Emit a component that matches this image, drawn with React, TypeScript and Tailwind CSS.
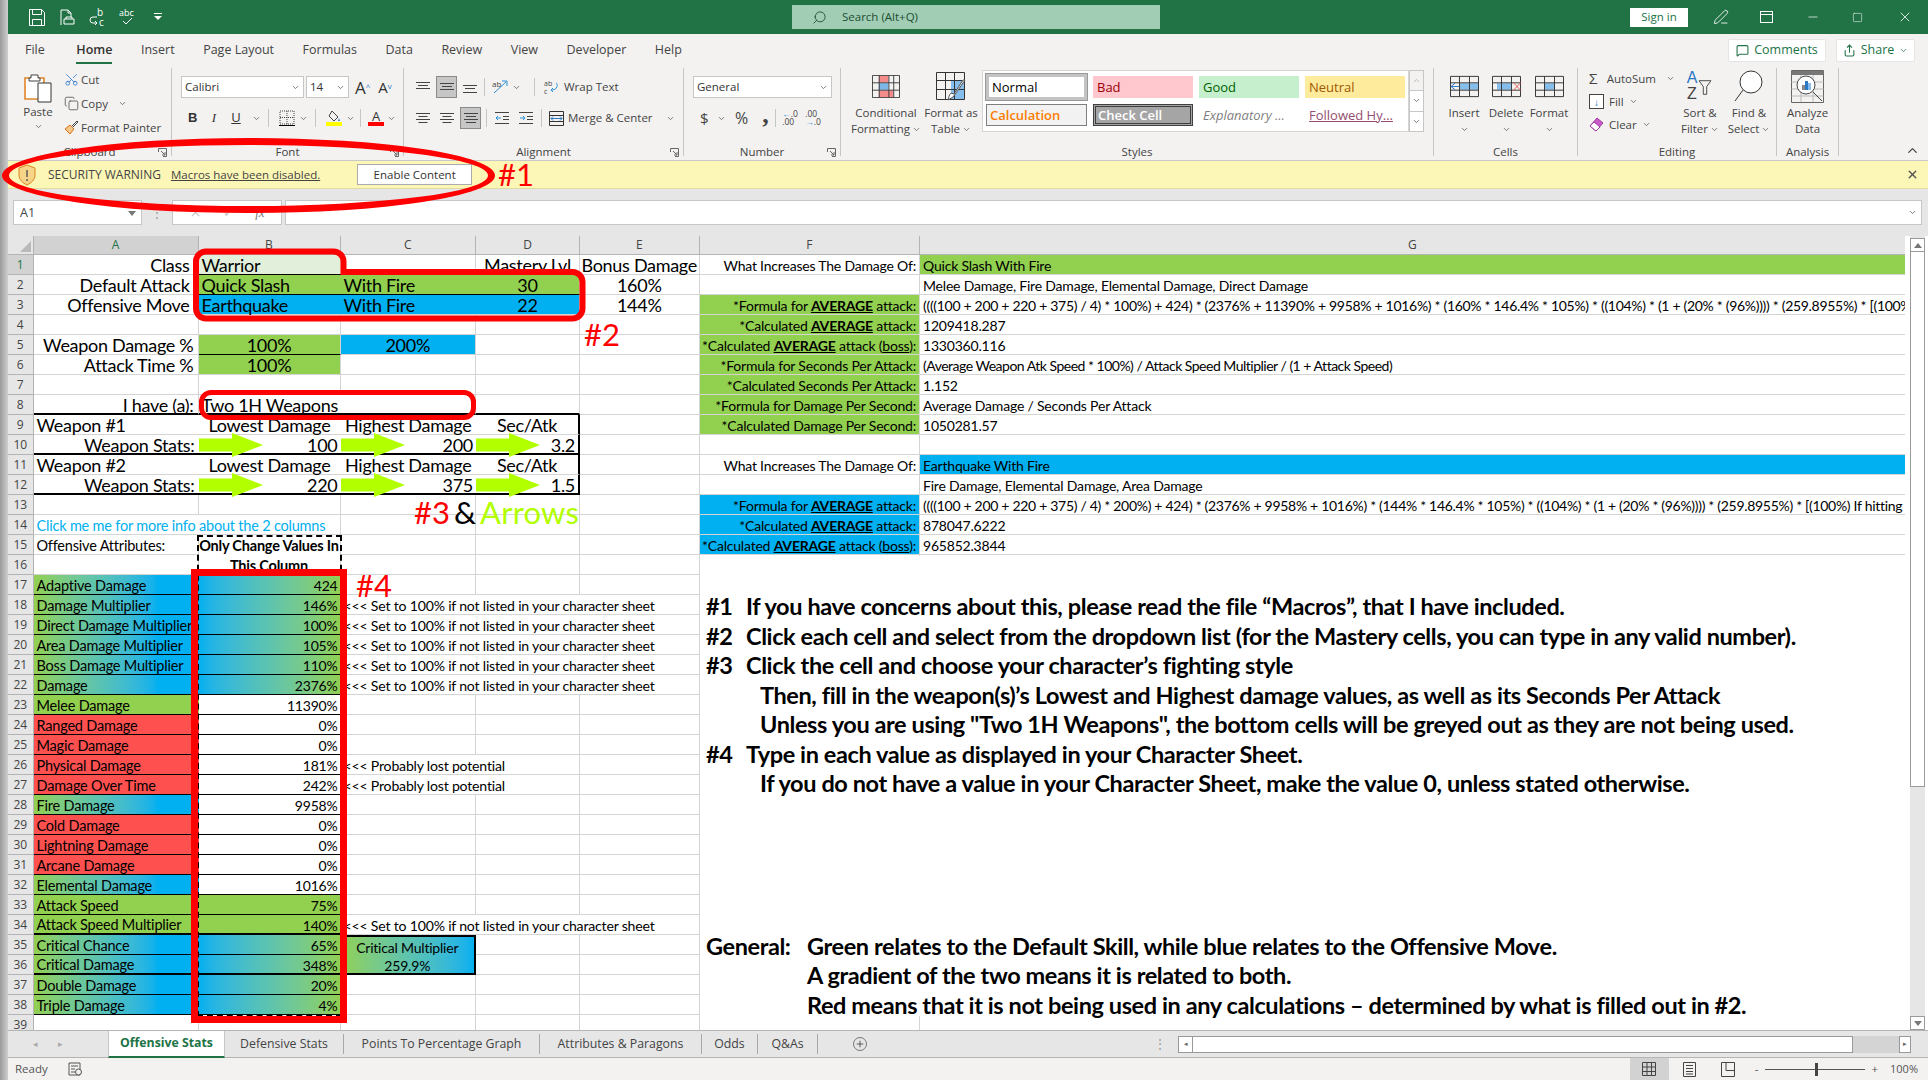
import React from 'react';
import { twMerge } from 'tailwind-merge';
import { Scissors, ChevronDown, ChevronUp, X, Search, Minus, Square, PenLine, MessageSquare, Share, Plus, Copy } from 'lucide-react';

type Def = { t?: React.ReactNode; c?: string };
const d = (t?: React.ReactNode, c = ''): Def => ({ t, c });

const GREEN = 'bg-[#92d050]';
const BLUE = 'bg-[#00b0f0]';
const RIGHT = 'justify-end';
const RIGHT8 = 'justify-end pr-[8px]';
const RIGHT4 = 'justify-end pr-[4px]';
const CENTER = 'justify-center';
const NOR = 'border-r-0';
const SM = 'text-[14.5px] tracking-[-0.2px]';

function Avg() {
  return <b className="underline">AVERAGE</b>;
}

function Arrow() {
  return (
    <svg className="absolute left-0 top-[-2px] z-10" width="64" height="24" viewBox="0 0 64 24">
      <path d="M0 5.5h33V0l31 12-31 12v-5.5H0z" fill="#b2ff00" />
    </svg>
  );
}

function Cell({ def, small }: { def?: Def; small?: boolean }) {
  return (
    <div
      className={twMerge(
        "relative flex items-center whitespace-nowrap border-r border-b border-[#d4d4d4] px-[3px] pt-[2px] leading-none font-['Lato',sans-serif] text-black min-w-0",
        small ? 'text-[14px] tracking-[-0.2px]' : 'text-[18px] tracking-[-0.3px]',
        def?.c
      )}
    >
      {def?.t}
    </div>
  );
}

const rowsTop: Record<number, { big: Def[]; f?: Def; g?: Def }> = {
  1: { big: [d('Class', RIGHT8), d('Warrior', 'bg-[#e2efda] border-b-black ' + NOR), d('', 'border-b-0'), d('Mastery Lvl', CENTER), d('Bonus Damage', CENTER)], f: d('What Increases The Damage Of:', RIGHT), g: d('Quick Slash With Fire', GREEN) },
  2: { big: [d('Default Attack', RIGHT8), d('Quick Slash', GREEN + ' border-b-black ' + NOR), d('With Fire', GREEN + ' border-b-black ' + NOR), d('30', GREEN + ' border-b-black ' + CENTER), d('160%', CENTER)], g: d('Melee Damage, Fire Damage, Elemental Damage, Direct Damage') },
  3: { big: [d('Offensive  Move', RIGHT8), d('Earthquake', BLUE + ' ' + NOR), d('With Fire', BLUE + ' ' + NOR), d('22', BLUE + ' ' + CENTER), d('144%', CENTER)], f: d(<span>*Formula for <Avg /> attack:</span>, GREEN + ' ' + RIGHT), g: d('((((100 + 200 + 220 + 375) / 4) * 100%) + 424) * (2376% + 11390% + 9958% + 1016%) * (160% * 146.4% * 105%) * ((104%) * (1 + (20% * (96%)))) * (259.8955%) * [(100%) If hitting a boss]', 'overflow-hidden tracking-[-0.3px]') },
  4: { big: [d(), d(), d(), d(), d()], f: d(<span>*Calculated <Avg /> attack:</span>, GREEN + ' ' + RIGHT), g: d('1209418.287') },
  5: { big: [d('Weapon Damage %', RIGHT4), d('100%', GREEN + ' border-b-black ' + CENTER), d('200%', BLUE + ' ' + CENTER), d(), d()], f: d(<span>*Calculated <Avg /> attack (<u>boss</u>):</span>, GREEN + ' ' + RIGHT), g: d('1330360.116') },
  6: { big: [d('Attack Time %', RIGHT4), d('100%', GREEN + ' ' + CENTER), d(), d(), d()], f: d('*Formula for Seconds Per Attack:', GREEN + ' ' + RIGHT), g: d('(Average Weapon Atk Speed * 100%) / Attack Speed Multiplier / (1 + Attack Speed)', 'tracking-[-0.5px]') },
  7: { big: [d(), d(), d(), d(), d()], f: d('*Calculated Seconds Per Attack:', GREEN + ' ' + RIGHT), g: d('1.152') },
  8: { big: [d('I have (a):', RIGHT4 + ' border-b-black border-b-2'), d('Two 1H Weapons', NOR + ' border-b-black border-b-2'), d('', 'border-b-black border-b-2'), d('', 'border-b-black border-b-2'), d()], f: d('*Formula for Damage Per Second:', GREEN + ' ' + RIGHT), g: d('Average Damage / Seconds Per Attack') },
  9: { big: [d('Weapon #1', NOR), d('Lowest Damage', CENTER + ' ' + NOR), d('Highest Damage', CENTER + ' ' + NOR), d('Sec/Atk', CENTER + ' border-r-black border-r-2'), d()], f: d('*Calculated Damage Per Second:', GREEN + ' ' + RIGHT), g: d('1050281.57') },
  10: { big: [d('Weapon Stats:', RIGHT4 + ' border-b-black border-b-2 ' + NOR), d(<><Arrow />100</>, RIGHT + ' border-b-black border-b-2 ' + NOR), d(<><Arrow />200</>, RIGHT + ' border-b-black border-b-2 ' + NOR), d(<><Arrow />3.2</>, RIGHT + ' border-b-black border-b-2 border-r-black border-r-2'), d()] },
  11: { big: [d('Weapon #2', NOR), d('Lowest Damage', CENTER + ' ' + NOR), d('Highest Damage', CENTER + ' ' + NOR), d('Sec/Atk', CENTER + ' border-r-black border-r-2'), d()], f: d('What Increases The Damage Of:', RIGHT), g: d('Earthquake With Fire', BLUE) },
  12: { big: [d('Weapon Stats:', RIGHT4 + ' border-b-black border-b-2 ' + NOR), d(<><Arrow />220</>, RIGHT + ' border-b-black border-b-2 ' + NOR), d(<><Arrow />375</>, RIGHT + ' border-b-black border-b-2 ' + NOR), d(<><Arrow />1.5</>, RIGHT + ' border-b-black border-b-2 border-r-black border-r-2'), d()], g: d('Fire Damage, Elemental Damage, Area Damage') },
  13: { big: [d(), d(), d(), d(), d()], f: d(<span>*Formula for <Avg /> attack:</span>, BLUE + ' ' + RIGHT), g: d('((((100 + 200 + 220 + 375) / 4) * 200%) + 424) * (2376% + 9958% + 1016%) * (144% * 146.4% * 105%) * ((104%) * (1 + (20% * (96%)))) * (259.8955%) * [(100%) If hitting a boss]', 'overflow-hidden tracking-[-0.3px]') },
  14: { big: [d('Click me me for more info about the 2 columns', 'text-[#00b0f0] ' + SM + ' ' + NOR), d(), d(), d(), d()], f: d(<span>*Calculated <Avg /> attack:</span>, BLUE + ' ' + RIGHT), g: d('878047.6222') },
  15: { big: [d('Offensive Attributes:', SM), d(<b>Only Change Values In</b>, SM + ' border-b-0 ' + CENTER), d(), d(), d()], f: d(<span>*Calculated <Avg /> attack (<u>boss</u>):</span>, BLUE + ' ' + RIGHT), g: d('965852.3844') },
  16: { big: [d(), d(<b>This Column</b>, SM + ' ' + CENTER), d(), d(), d()] },
};

type Kind = 'grad' | 'green' | 'red';
const NOTE = '<<< Set to 100% if not listed in your character sheet';
const LOST = '<<< Probably lost potential';
const attrs: [string, string, Kind, Kind | 'white', string?][] = [
  ['Adaptive Damage', '424', 'grad', 'grad'],
  ['Damage Multiplier', '146%', 'grad', 'grad', NOTE],
  ['Direct Damage Multiplier', '100%', 'grad', 'grad', NOTE],
  ['Area Damage Multiplier', '105%', 'grad', 'grad', NOTE],
  ['Boss Damage Multiplier', '110%', 'grad', 'grad', NOTE],
  ['Damage', '2376%', 'grad', 'grad', NOTE],
  ['Melee Damage', '11390%', 'green', 'white'],
  ['Ranged Damage', '0%', 'red', 'white'],
  ['Magic Damage', '0%', 'red', 'white'],
  ['Physical Damage', '181%', 'red', 'white', LOST],
  ['Damage Over Time', '242%', 'red', 'white', LOST],
  ['Fire Damage', '9958%', 'grad', 'white'],
  ['Cold Damage', '0%', 'red', 'white'],
  ['Lightning Damage', '0%', 'red', 'white'],
  ['Arcane Damage', '0%', 'red', 'white'],
  ['Elemental Damage', '1016%', 'grad', 'white'],
  ['Attack Speed', '75%', 'green', 'green'],
  ['Attack Speed Multiplier', '140%', 'green', 'green', NOTE],
  ['Critical Chance', '65%', 'grad', 'grad'],
  ['Critical Damage', '348%', 'grad', 'grad'],
  ['Double Damage', '20%', 'grad', 'grad'],
  ['Triple Damage', '4%', 'grad', 'grad'],
];

const aCls: Record<Kind, string> = {
  grad: 'bg-linear-to-r from-[#92d050] to-[#00b0f0] to-75% border-b-black border-r-0',
  green: 'bg-[#92d050] border-b-black border-r-0',
  red: 'bg-[#ff5050] border-b-black border-r-0',
};
const bCls: Record<string, string> = {
  grad: 'bg-linear-to-r from-[#00b0f0] to-[#92d050] border-b-black justify-end border-r-0',
  green: 'bg-[#92d050] border-b-black justify-end border-r-0',
  white: 'bg-white border-b-black justify-end border-r-0',
  red: '',
};

function RowHead({ n }: { n: number }) {
  return (
    <div
      className={twMerge(
        'flex items-center justify-center border-b border-r border-[#b4b4b4] bg-[#e6e6e6] text-[12px] text-[#444]',
        n === 1 && 'bg-[#d2d2d2] text-[#217346]'
      )}
    >
      {n}
    </div>
  );
}

function Sheet() {
  const rows: React.ReactNode[] = [];
  for (let n = 1; n <= 16; n++) {
    const r = rowsTop[n];
    rows.push(<RowHead key={`h${n}`} n={n} />);
    r.big.forEach((def, i) => rows.push(<Cell key={`${n}-${i}`} def={def} />));
    rows.push(<Cell key={`${n}-f`} def={r.f} small />);
    rows.push(<Cell key={`${n}-g`} def={r.g} small />);
  }
  attrs.forEach(([name, val, a, b, note], i) => {
    const n = 17 + i;
    rows.push(<RowHead key={`h${n}`} n={n} />);
    const thick = n === 34 || n === 36 ? ' border-b-2' : '';
    rows.push(<Cell key={`${n}-a`} small def={d(name, SM + ' ' + aCls[a] + thick)} />);
    rows.push(<Cell key={`${n}-b`} small def={d(val, bCls[b] + thick)} />);
    if (n === 35) {
      rows.push(<Cell key={`${n}-c`} small def={d('Critical Multiplier', 'bg-linear-to-r from-[#92d050] to-[#00b0f0] justify-center border-t-2 border-t-black border-b-0 border-r-2 border-r-black')} />);
    } else if (n === 36) {
      rows.push(<Cell key={`${n}-c`} small def={d('259.9%', 'bg-linear-to-r from-[#92d050] to-[#00b0f0] justify-center border-b-2 border-b-black border-r-2 border-r-black')} />);
    } else {
      rows.push(<Cell key={`${n}-c`} small def={d(note, note ? NOR + ' text-[14.1px]' : '')} />);
    }
    rows.push(<Cell key={`${n}-d`} small def={d('', note === NOTE ? NOR : '')} />);
    rows.push(<Cell key={`${n}-e`} small />);
    rows.push(<Cell key={`${n}-f`} small />);
    rows.push(<Cell key={`${n}-g`} small />);
  });
  rows.push(<RowHead key="h39" n={39} />);
  for (let i = 0; i < 7; i++) rows.push(<Cell key={`39-${i}`} small />);

  return (
    <div className="flex-1 min-h-0 overflow-hidden flex">
      <div className="flex flex-col w-[1897px] overflow-hidden">
        <div className="grid grid-cols-[25.5px_165px_142px_135.5px_104px_119.5px_220.5px_985.5px] h-[19px] bg-[#e6e6e6] text-[12px] text-[#444] shrink-0">
          <div className="relative border-r border-b border-[#b4b4b4]">
            <svg className="absolute right-[2px] bottom-[2px]" width="11" height="11" viewBox="0 0 11 11">
              <path d="M11 0v11H0z" fill="#b9b9b9" />
            </svg>
          </div>
          {['A', 'B', 'C', 'D', 'E', 'F', 'G'].map((h, i) => (
            <div
              key={h}
              className={twMerge(
                'flex items-center justify-center border-r border-b border-[#b4b4b4]',
                i === 0 && 'bg-[#d2d2d2] text-[#217346]'
              )}
            >
              {h}
            </div>
          ))}
        </div>
        <div className="grid grid-cols-[25.5px_165px_142px_135.5px_104px_119.5px_220.5px_985.5px] auto-rows-[20px] flex-1 min-h-0 overflow-hidden">
          {rows}
        </div>
      </div>
      <VScroll />
    </div>
  );
}

function VScroll() {
  return (
    <div className="ml-[5px] mr-[3px] w-[15px] flex flex-col bg-[#e6e6e6] pt-[2px] shrink-0">
      <div className="h-[14px] bg-white border border-[#9a9a9a] flex items-center justify-center">
        <svg width="8" height="5"><path d="M4 0l4 5H0z" fill="#777" /></svg>
      </div>
      <div className="h-[535px] bg-white border-x border-b border-[#9a9a9a]" />
      <div className="flex-1" />
      <div className="h-[14px] bg-white border border-[#9a9a9a] flex items-center justify-center">
        <svg width="8" height="5"><path d="M4 5l4-5H0z" fill="#777" /></svg>
      </div>
    </div>
  );
}

function Caret({ className = '' }: { className?: string }) {
  return <ChevronDown size={9} strokeWidth={2} className={twMerge('text-[#555] shrink-0', className)} />;
}

function Group({ label, className, children, expander }: { label: string; className: string; children: React.ReactNode; expander?: boolean }) {
  return (
    <div className={twMerge('relative flex flex-col h-[88px] border-r border-[#c6c6c6] shrink-0', className)}>
      <div className="flex-1 min-h-0 flex">{children}</div>
      <div className="h-[16px] -mb-[4px] text-center text-[11.5px] leading-[16px] text-[#444]">{label}</div>
      {expander && (
        <svg className="absolute right-[4px] bottom-[-1px]" width="9" height="9" viewBox="0 0 9 9" fill="none" stroke="#666">
          <path d="M.5 4V.5H8.5V8.5H5M3 3l4 4M7 4v3H4" />
        </svg>
      )}
    </div>
  );
}

function Big({ icon, l1, l2, caret, className = '' }: { icon: React.ReactNode; l1: string; l2?: string; caret?: boolean; className?: string }) {
  return (
    <div className={twMerge('flex flex-col items-center text-[11.5px] leading-[16px] text-[#444]', className)}>
      <div className="h-[36px] flex items-center justify-center">{icon}</div>
      <div className="mt-[1px]">{l1}</div>
      {l2 ? (
        <div className="flex items-center gap-[2px]">{l2}{caret && <Caret />}</div>
      ) : (
        caret && <div className="h-[16px] flex items-center"><Caret /></div>
      )}
    </div>
  );
}

function Lines({ rows, w = 14 }: { rows: [number, number][]; w?: number }) {
  return (
    <svg width={w} height="14" viewBox={`0 0 ${w} 14`} stroke="#444">
      {rows.map(([y, l], i) => (
        <path key={i} d={`M${(w - l) / 2} ${y + 0.5}h${l}`} />
      ))}
    </svg>
  );
}

function GridIcon({ fills, extra }: { fills: React.ReactNode; extra?: React.ReactNode }) {
  return (
    <svg width="31" height="23" viewBox="0 0 31 25" preserveAspectRatio="none" fill="none">
      {fills}
      <path d="M1.5 1.5h28v22h-28zM1.5 8.5h28M1.5 16.5h28M10.5 1.5v22M20.5 1.5v22" stroke="#333" />
      {extra}
    </svg>
  );
}

function Ribbon() {
  return (
    <div className="flex h-[92px] bg-[#f3f2f1] pb-[4px] shrink-0">
      <Group label="Clipboard" className="w-[164px]" expander>
        <div className="flex flex-col items-center ml-[14px] w-[32px] text-[11.5px] leading-[16px] text-[#444]">
          <svg className="mt-[5px]" width="28" height="30" viewBox="0 0 28 30" fill="none">
            <path d="M1 5h19v21H1z" fill="#fff" stroke="#e0862a" strokeWidth="1.6" />
            <path d="M7 5V2h7v3h2v3H5V5z" fill="#fff" stroke="#444" />
            <path d="M14 10h13v19H14z" fill="#fff" stroke="#333" />
          </svg>
          <div className="mt-[1px]">Paste</div>
          <Caret className="mt-[2px]" />
        </div>
        <div className="ml-[10px] mt-[3px] flex flex-col gap-[7px] text-[11.5px] leading-[17px] text-[#444]">
          <div className="flex items-center gap-[2px]"><Scissors size={15} className="text-[#2b78c5] -rotate-90" strokeWidth={1.3} />Cut</div>
          <div className="flex items-center gap-[2px]"><Copy size={15} strokeWidth={1.2} />Copy<Caret className="ml-[8px]" /></div>
          <div className="flex items-center gap-[2px]">
            <svg width="15" height="15" viewBox="0 0 15 15" fill="none"><path d="M1 9l5-4 4 4-4 5z" fill="#f6c58a" stroke="#d9731f" /><path d="M8 6l5-5 1 1-5 5" stroke="#444" /></svg>
            Format Painter
          </div>
        </div>
      </Group>

      <Group label="Font" className="w-[232px]" expander>
        <div className="flex flex-col pl-[9px] pt-[8px]">
          <div className="flex items-center text-[11.5px] text-[#333]">
            <div className="w-[123px] h-[22px] bg-white border border-[#c6c6c6] flex items-center justify-between px-[3px]">Calibri<Caret /></div>
            <div className="ml-[2px] w-[43px] h-[22px] bg-white border border-[#c6c6c6] flex items-center justify-between px-[3px]">14<Caret /></div>
            <span className="ml-[6px] text-[17px] leading-none">A<sup className="text-[8px] text-[#2b78c5]">^</sup></span>
            <span className="ml-[8px] text-[15px] leading-none">A<sup className="text-[8px] text-[#2b78c5]">v</sup></span>
          </div>
          <div className="flex items-center h-[22px] mt-[9px] text-[13px] text-[#333] pl-[7px]">
            <b className="w-[18px] font-['Liberation_Sans',sans-serif]">B</b>
            <i className="w-[16px] text-center font-['Liberation_Serif',serif]">I</i>
            <u className="ml-[7px] w-[14px] text-center">U</u>
            <Caret className="ml-[9px]" />
            <div className="ml-[7px] h-[18px] border-l border-[#c6c6c6]" />
            <svg className="ml-[10px]" width="16" height="16" viewBox="0 0 16 16" fill="none" stroke="#444" strokeDasharray="1 1"><path d="M1 1h14v13H1zM8 1v13M1 7.5h14" /><path d="M0 15.5h16" stroke="#000" strokeDasharray="0" /></svg>
            <Caret className="ml-[4px]" />
            <div className="ml-[7px] h-[18px] border-l border-[#c6c6c6]" />
            <div className="ml-[10px] flex flex-col items-center w-[16px]">
              <svg width="14" height="12" viewBox="0 0 14 12" fill="none" stroke="#444"><path d="M5 1l6 6-4 4-5-5z" /><path d="M12 8l1 3h-2z" fill="#2b78c5" stroke="none" /></svg>
              <div className="w-[16px] h-[4px] bg-[#ffff00]" />
            </div>
            <Caret className="ml-[4px]" />
            <div className="ml-[5px] h-[18px] border-l border-[#c6c6c6]" />
            <div className="ml-[7px] flex flex-col items-center w-[16px] leading-[12px]">
              <span className="h-[12px] text-[13px]">A</span>
              <div className="w-[16px] h-[4px] bg-[#ff0000]" />
            </div>
            <Caret className="ml-[3px]" />
          </div>
        </div>
      </Group>

      <Group label="Alignment" className="w-[280px]" expander>
        <div className="flex flex-col pl-[12px] pt-[8px]">
          <div className="flex items-center h-[22px]">
            <Lines rows={[[2, 14], [5, 10], [8, 14]]} />
            <div className="ml-[6px] w-[21px] h-[22px] bg-[#c6c6c6] border border-[#8a8a8a] flex items-center justify-center"><Lines rows={[[3, 14], [6, 10], [9, 14]]} /></div>
            <div className="ml-[6px]"><Lines rows={[[5, 14], [8, 10], [12, 14]]} /></div>
            <div className="ml-[7px] h-[18px] border-l border-[#c6c6c6]" />
            <svg className="ml-[7px]" width="17" height="16" viewBox="0 0 17 16" fill="none"><path d="M2 14L14 3M10 2h5v5" stroke="#2b90d9" /><text x="0" y="8" fontSize="8" fill="#444">ab</text></svg>
            <Caret className="ml-[3px]" />
            <div className="ml-[13px] h-[18px] border-l border-[#c6c6c6]" />
            <div className="ml-[9px] flex items-center gap-[3px] text-[11.5px] text-[#444]">
              <svg width="15" height="16" viewBox="0 0 15 16" fill="none"><text x="0" y="7" fontSize="7" fill="#444">ab</text><text x="0" y="15" fontSize="7" fill="#444">c</text><path d="M12 4c2 0 2 7-4 7M9 9l-2 2 2 2" stroke="#2b90d9" /></svg>
              <span className="ml-[2px]">Wrap Text</span>
            </div>
          </div>
          <div className="flex items-center h-[22px] mt-[9px]">
            <Lines rows={[[2, 14], [5, 9], [8, 14], [11, 9]]} />
            <div className="ml-[10px]"><Lines rows={[[2, 14], [5, 9], [8, 14], [11, 9]]} /></div>
            <div className="ml-[6px] w-[21px] h-[22px] bg-[#c6c6c6] border border-[#8a8a8a] flex items-center justify-center"><Lines rows={[[2, 14], [5, 10], [8, 14], [11, 10]]} /></div>
            <div className="ml-[5px] h-[18px] border-l border-[#c6c6c6]" />
            <svg className="ml-[8px]" width="14" height="14" viewBox="0 0 14 14" fill="none" stroke="#444"><path d="M0 1.5h14M0 12.5h14M8 5.5h6M8 8.5h6" /><path d="M6 7H1M3 5L1 7l2 2" stroke="#2b90d9" /></svg>
            <svg className="ml-[10px]" width="14" height="14" viewBox="0 0 14 14" fill="none" stroke="#444"><path d="M0 1.5h14M0 12.5h14M8 5.5h6M8 8.5h6" /><path d="M1 7h5M4 5l2 2-2 2" stroke="#2b90d9" /></svg>
            <div className="ml-[8px] h-[18px] border-l border-[#c6c6c6]" />
            <div className="ml-[7px] flex items-center gap-[4px] text-[11.5px] text-[#444]">
              <svg width="15" height="15" viewBox="0 0 15 15" fill="none"><path d="M.5.5h14v14H.5zM.5 4.5h14M.5 10.5h14" stroke="#333" /><path d="M2 7.5h11M4 5.5l-2 2 2 2M11 5.5l2 2-2 2" stroke="#2b78c5" /></svg>
              Merge &amp; Center
              <Caret className="ml-[9px]" />
            </div>
          </div>
        </div>
      </Group>

      <Group label="Number" className="w-[157px]" expander>
        <div className="flex flex-col pl-[9px] pt-[8px]">
          <div className="w-[139px] h-[22px] bg-white border border-[#c6c6c6] flex items-center justify-between px-[3px] text-[11.5px] text-[#333]">General<Caret /></div>
          <div className="flex items-center h-[22px] mt-[9px] text-[#444] pl-[7px]">
            <span className="text-[15px] w-[9px]">$</span>
            <Caret className="ml-[8px]" />
            <span className="ml-[9px] text-[16px]">%</span>
            <b className="ml-[14px] w-[8px] text-[26px] leading-[12px] h-[18px] font-['Liberation_Serif',serif]">,</b>
            <div className="ml-[5px] h-[18px] border-l border-[#c6c6c6]" />
            <span className="ml-[6px] text-[8.5px] leading-[8px] w-[17px]"><span className="text-[#2b90d9]">←</span>.0<br />.00</span>
            <span className="ml-[6px] text-[8.5px] leading-[8px] w-[17px]">.00<br /><span className="text-[#2b90d9]">→</span>.0</span>
          </div>
        </div>
      </Group>

      <Group label="Styles" className="w-[593px]">
        <Big
          className="ml-[7px] w-[76px]"
          l1="Conditional"
          l2="Formatting"
          caret
          icon={
            <svg width="28" height="23" viewBox="0 0 29 28" preserveAspectRatio="none" fill="none">
              <path d="M7 1h10v8H7zM7 19h15v8H7z" fill="#f48b8b" />
              <path d="M7 10h10v8H7z" fill="#7cb7e8" />
              <path d="M.5.5h28v27H.5zM.5 9.5h28M.5 18.5h28M7.5.5v27M17.5.5v27M22.5.5v27" stroke="#333" />
            </svg>
          }
        />
        <Big
          className="w-[64px] ml-[-5px]"
          l1="Format as"
          l2="Table"
          caret
          icon={
            <svg width="31" height="29" viewBox="0 0 31 29" fill="none">
              <path d="M15 8h13v20H15z" fill="#85bdec" />
              <path d="M.5.5h28v27H.5zM.5 8.5h28M.5 17.5h28M9.5.5v27M18.5.5v27" stroke="#333" />
              <path d="M29 8L20 21l-3 4-5 3c1-3 1-5 3-7l3 1 9-14z" fill="#fff" stroke="#555" />
            </svg>
          }
        />
        <div className="ml-[-1px] mt-[2px] w-[427px] h-[62px] bg-white border border-[#d4d4d4] flex flex-col gap-[4px] p-[3px] text-[13px] leading-none shrink-0">
          <div className="flex gap-[6px] h-[26px]">
            <div className="w-[101px] bg-white border-[3px] border-[#c4c4c4] outline-1 outline-[#999] flex items-center px-[3px] text-black">Normal</div>
            <div className="w-[100px] my-[2px] bg-[#ffc7ce] flex items-center px-[4px] text-[#9c0006]">Bad</div>
            <div className="w-[100px] my-[2px] bg-[#c6efce] flex items-center px-[4px] text-[#006100]">Good</div>
            <div className="w-[100px] my-[2px] bg-[#ffeb9c] flex items-center px-[4px] text-[#9c5700]">Neutral</div>
          </div>
          <div className="flex gap-[6px] h-[22px]">
            <div className="w-[101px] bg-[#f2f2f2] border border-[#7f7f7f] flex items-center px-[3px] font-semibold text-[#fa7d00]">Calculation</div>
            <div className="w-[100px] bg-[#a5a5a5] border-[3px] border-double border-[#3f3f3f] flex items-center px-[2px] font-semibold text-white">Check Cell</div>
            <div className="w-[100px] flex items-center px-[4px] italic text-[#7f7f7f]">Explanatory ...</div>
            <div className="w-[100px] flex items-center px-[4px] text-[#954f72] underline">Followed Hy...</div>
          </div>
        </div>
        <div className="mt-[2px] w-[15px] h-[62px] flex flex-col border border-[#c6c6c6] shrink-0">
          <div className="flex-1 bg-[#f3f2f1] flex items-center justify-center border-b border-[#c6c6c6]"><ChevronUp size={9} className="text-[#aaa]" /></div>
          <div className="flex-1 bg-white flex items-center justify-center border-b border-[#c6c6c6]"><Caret /></div>
          <div className="flex-1 bg-white flex items-center justify-center"><Caret /></div>
        </div>
      </Group>

      <Group label="Cells" className="w-[144px]">
        <Big
          className="ml-[9px] w-[42px]"
          l1="Insert"
          caret
          icon={<GridIcon fills={<path d="M11 9h19v7H11z" fill="#85bdec" />} extra={<path d="M10 12.5H2M6 9l-4 3.5L6 16" stroke="#2b78c5" />} />}
        />
        <Big
          className="w-[42px]"
          l1="Delete"
          caret
          icon={<GridIcon fills={<path d="M6 9h14v7H6z" fill="#85bdec" />} extra={<path d="M22 8l8 9M30 8l-8 9" stroke="#e8584f" />} />}
        />
        <Big
          className="w-[44px]"
          l1="Format"
          caret
          icon={<GridIcon fills={<path d="M10 9h11v7H10z" fill="#85bdec" />} />}
        />
      </Group>

      <Group label="Editing" className="w-[199px]">
        <div className="ml-[11px] mt-[2px] flex flex-col gap-[6px] text-[11.5px] leading-[17px] text-[#444] w-[86px]">
          <div className="flex items-center gap-[7px]"><span className="text-[15px] w-[13px]">Σ</span>AutoSum<Caret className="ml-[3px]" /></div>
          <div className="flex items-center gap-[5px]">
            <div className="w-[15px] h-[15px] border border-[#444] bg-white flex items-center justify-center text-[#2b78c5] text-[10px] leading-none">↓</div>
            Fill<Caret />
          </div>
          <div className="flex items-center gap-[5px]">
            <svg width="15" height="15" viewBox="0 0 15 15" fill="none"><path d="M1 9l7-8 6 5-7 8z" fill="#c75bc7" stroke="#a13aa1" /><path d="M5 5l6 5-4 4-6-5z" fill="#fff" stroke="#a13aa1" /></svg>
            Clear<Caret />
          </div>
        </div>
        <Big
          className="w-[48px] ml-[1px]"
          l1="Sort &"
          l2="Filter"
          caret
          icon={
            <div className="flex items-end text-[16px] leading-[16px] h-[32px] font-['Liberation_Sans',sans-serif]">
              <div className="flex flex-col items-center"><span className="text-[#2b78c5]">A</span><span>Z</span></div>
              <svg width="16" height="17" viewBox="0 0 16 20" fill="none" stroke="#333" className="mb-[6px]"><path d="M1 2h14l-5 7v9H6V9z" /></svg>
            </div>
          }
        />
        <Big
          className="w-[46px] ml-[2px]"
          l1="Find &"
          l2="Select"
          caret
          icon={
            <svg width="30" height="33" viewBox="0 0 30 33" fill="none" stroke="#333"><circle cx="17" cy="12" r="11" fill="#fff" /><path d="M9 20L1 31" /></svg>
          }
        />
      </Group>

      <Group label="Analysis" className="w-[62px]">
        <Big
          className="w-full"
          l1="Analyze"
          l2="Data"
          icon={
            <svg width="33" height="33" viewBox="0 0 33 33" fill="none">
              <path d="M.5.5h32v32H.5z" stroke="#666" />
              <path d="M.5 1h32v4H.5z" fill="#777" />
              <path d="M.5 12h32M.5 19h32M.5 26h32M10 5v27M22 5v27" stroke="#bbb" />
              <circle cx="15" cy="15" r="9" fill="#fff" stroke="#444" />
              <path d="M11 15h3v5h-3z" fill="#888" /><path d="M14 11h3v9h-3z" fill="#2b78c5" /><path d="M17 13h3v7h-3z" fill="#85bdec" />
              <path d="M22 22l9 9" stroke="#444" />
            </svg>
          }
        />
      </Group>

      <div className="flex-1 flex items-end justify-end pr-[8px]">
        <ChevronUp size={15} className="text-[#444] translate-y-[2px]" />
      </div>
    </div>
  );
}

function TabsRow() {
  const tabs = ['File', 'Home', 'Insert', 'Page Layout', 'Formulas', 'Data', 'Review', 'View', 'Developer', 'Help'];
  return (
    <div className="h-[34px] flex items-center bg-[#f3f2f1] pl-[17px] pb-[2px] text-[12.5px] text-[#444] shrink-0">
      <div className="flex gap-[28.5px]">
        {tabs.map(t => (
          <div key={t} className={twMerge('relative', t === 'Home' && 'ml-[3px] font-semibold text-[#333]')}>
            {t}
            {t === 'Home' && <div className="absolute left-0 right-0 bottom-[-5px] h-[2px] bg-[#217346]" />}
          </div>
        ))}
      </div>
      <div className="flex-1" />
      <div className="flex items-center gap-[10px] pr-[13px] text-[12.5px] text-[#217346]">
        <div className="w-[98px] h-[23px] bg-white rounded-[2px] border border-[#e5e5e5] flex items-center justify-center gap-[5px]">
          <MessageSquare size={13} />Comments
        </div>
        <div className="w-[79px] h-[23px] bg-white rounded-[2px] border border-[#e5e5e5] flex items-center justify-center gap-[5px]">
          <Share size={13} />Share<Caret className="text-[#217346]" />
        </div>
      </div>
    </div>
  );
}

function TitleBar() {
  return (
    <div className="h-[34px] bg-[#217346] flex items-center text-white shrink-0">
      <div className="flex items-center pl-[21px] w-[784px]">
        <svg width="16" height="17" viewBox="0 0 16 17" fill="none" stroke="#fff"><path d="M.5.5h12l3 3v13H.5zM3.5.5v5h9v-5M3.5 16.5v-6h9v6" /></svg>
        <svg className="ml-[15px]" width="15" height="17" viewBox="0 0 15 17" fill="none" stroke="#fff"><path d="M1 16V1h7l3 3v4M8 1v3h3M4 10h10v5H4zM6 10V8h6v2" /></svg>
        <svg className="ml-[14px]" width="17" height="22" viewBox="0 0 17 22" fill="none">
          <text x="8" y="10" fontSize="10" fill="#fff">b</text>
          <text x="10" y="20" fontSize="10" fill="#fff">c</text>
          <path d="M8 11H4a3 3 0 0 0 0 6h4M6 15l2 2-2 2" stroke="#fff" />
        </svg>
        <svg className="ml-[13px]" width="17" height="22" viewBox="0 0 17 22" fill="none">
          <text x="0" y="10" fontSize="9" fill="#fff">abc</text>
          <path d="M4 15l3 3 6-6" stroke="#fff" />
        </svg>
        <svg className="ml-[18px]" width="8" height="8" viewBox="0 0 8 8" fill="#fff"><path d="M0 0h8v1H0zM0 3h8L4 7z" /></svg>
      </div>
      <div className="w-[368px] h-[24px] bg-[#a0cdb3] flex items-center pl-[20px] text-[11.5px] text-[#1e4d34]">
        <Search size={15} className="-scale-x-100" strokeWidth={1.4} />
        <span className="ml-[15px]">Search (Alt+Q)</span>
      </div>
      <div className="flex-1" />
      <div className="w-[58px] h-[19px] bg-white text-[#217346] text-[11.5px] flex items-center justify-center">Sign in</div>
      <PenLine size={16} className="ml-[25px]" strokeWidth={1.3} />
      <div className="ml-[31px] w-[13px] h-[12px] border border-white flex items-start justify-center">
        <div className="w-[11px] border-t border-white mt-[2px]" />
      </div>
      <Minus size={14} className="ml-[33px]" strokeWidth={1.2} />
      <Square size={11} className="ml-[32px]" strokeWidth={1.2} />
      <X size={16} className="ml-[34px] mr-[15px]" strokeWidth={1.2} />
    </div>
  );
}

function SecurityBar() {
  return (
    <div className="h-[28px] bg-[#fcf7b6] border-b border-[#e0dca0] flex items-center text-[11.5px] text-[#444] shrink-0">
      <svg className="ml-[9px]" width="20" height="22" viewBox="0 0 20 22" fill="none">
        <path d="M10 1l8 3v7c0 5-4 8-8 10-4-2-8-5-8-10V4z" fill="#f6d488" stroke="#d9861f" />
        <path d="M10 6v7M10 15v2" stroke="#555" strokeWidth="1.4" />
      </svg>
      <span className="ml-[11px] text-[12px]">SECURITY WARNING</span>
      <span className="ml-[10px] underline">Macros have been disabled.</span>
      <div className="ml-[37px] w-[115px] h-[21px] bg-white border border-[#acacac] flex items-center justify-center text-[#333]">Enable Content</div>
      <div className="flex-1" />
      <X size={13} strokeWidth={2.5} className="mr-[9px] text-[#555]" />
    </div>
  );
}

function FormulaBar() {
  return (
    <div className="h-[47px] bg-[#e6e6e6] pt-[11px] pb-[11px] pl-[5px] pr-[6px] flex shrink-0 text-[#444]">
      <div className="w-[129px] bg-white border border-[#c6c6c6] flex items-center justify-between pl-[6px] pr-[5px] pt-[1px] text-[12.5px]">
        A1
        <svg width="8" height="5"><path d="M0 0h8L4 5z" fill="#777" /></svg>
      </div>
      <div className="w-[30px] flex items-center justify-center text-[#999] text-[12px]">⋮</div>
      <div className="w-[110px] bg-white border border-[#c6c6c6] flex items-center justify-around px-[6px] text-[#c6c6c6] text-[13px]">
        <X size={13} strokeWidth={2} />
        <span>✓</span>
        <i className="font-['Liberation_Serif',serif] text-[#777]">fx</i>
      </div>
      <div className="ml-[3px] flex-1 bg-white border border-[#c6c6c6] flex items-center justify-end pr-[4px]"><Caret /></div>
    </div>
  );
}

function TabStrip() {
  const tabs: [string, string][] = [
    ['Defensive Stats', 'w-[119px]'],
    ['Points To Percentage Graph', 'w-[196px]'],
    ['Attributes & Paragons', 'w-[162px]'],
    ['Odds', 'w-[56px]'],
    ['Q&As', 'w-[60px]'],
  ];
  return (
    <div className="h-[28px] bg-[#e6e6e6] border-t border-b border-[#b4b4b4] flex items-center text-[12.3px] text-[#444] shrink-0">
      <div className="w-[100px] flex items-center pl-[25px] gap-[20px] text-[#aaa] text-[9px]">
        <span>◂</span><span>▸</span>
      </div>
      <div className="w-[117px] h-[27px] mt-[1px] bg-white border-x border-[#c6c6c6] border-b-2 border-b-[#217346] flex items-center justify-center font-bold text-[#217346]">
        Offensive Stats
      </div>
      {tabs.map(([t, w]) => (
        <div key={t} className={twMerge('h-[20px] border-r border-[#a8a8a8] flex items-center justify-center', w)}>{t}</div>
      ))}
      <div className="ml-[35px] w-[14px] h-[14px] rounded-full border border-[#777] flex items-center justify-center"><Plus size={10} /></div>
      <div className="ml-[287px] text-[#999]">⋮</div>
      <div className="ml-[12px] h-[17px] w-[733px] flex bg-[#d4d4d4]">
        <div className="w-[15px] bg-white border border-[#999] flex items-center justify-center text-[7px] text-[#666]">◂</div>
        <div className="w-[660px] bg-white border-y border-r border-[#999]" />
        <div className="flex-1" />
        <div className="w-[12px] bg-white border border-[#999] flex items-center justify-center text-[7px] text-[#666]">▸</div>
      </div>
    </div>
  );
}

function StatusBar() {
  return (
    <div className="flex-1 bg-[#f3f2f1] flex items-center text-[11.5px] text-[#555]">
      <span className="ml-[7px]">Ready</span>
      <svg className="ml-[20px]" width="15" height="15" viewBox="0 0 15 15" fill="none" stroke="#555"><path d="M1 1h11v12H1zM3 4h7M3 7h4M3 10h4" /><circle cx="10.5" cy="10" r="3" fill="#f3f2f1" /></svg>
      <div className="flex-1" />
      <div className="w-[39px] h-full bg-[#d2d2d2] flex items-center justify-center">
        <svg width="14" height="14" viewBox="0 0 14 14" fill="none" stroke="#444"><path d="M.5.5h13v13H.5zM.5 5h13M.5 9.5h13M5 .5v13M9.5.5v13" /></svg>
      </div>
      <svg className="ml-[14px]" width="13" height="15" viewBox="0 0 13 15" fill="none" stroke="#444"><path d="M.5.5h12v14H.5zM3 3.5h7M3 6.5h7M3 9.5h7M3 12h7" /></svg>
      <svg className="ml-[25px]" width="14" height="15" viewBox="0 0 14 15" fill="none" stroke="#444"><path d="M.5.5h13v14H.5zM5 .5v8h8" /></svg>
      <span className="ml-[20px]">-</span>
      <div className="ml-[7px] relative w-[100px] h-[1px] bg-[#555]">
        <div className="absolute left-[50px] top-[-6px] w-[3px] h-[13px] bg-[#444]" />
      </div>
      <span className="ml-[6px]">+</span>
      <span className="ml-[12px] mr-[10px] text-[11px]">100%</span>
    </div>
  );
}

function NoteRow({ label, children, indent }: { label?: string; children: React.ReactNode; indent?: string }) {
  return (
    <div className="flex items-center h-[29.5px]">
      {label && <span className={indent ?? 'w-[40px]'}>{label}</span>}
      <span className={label ? '' : indent}>{children}</span>
    </div>
  );
}

function Annotations() {
  return (
    <>
      {/* floating text box over the F:G area */}
      <div className="absolute left-[700px] top-[556px] w-[1205px] h-[460px] bg-white pl-[6px] pt-[36px] font-['Lato',sans-serif] font-bold text-[23.5px] tracking-[-0.4px] text-black z-20">
        <NoteRow label="#1">If you have concerns about this, please read the file “Macros”, that I have included.</NoteRow>
        <NoteRow label="#2">Click each cell and select from the dropdown list (for the Mastery cells, you can type in any valid number).</NoteRow>
        <NoteRow label="#3">Click the cell and choose your character’s fighting style</NoteRow>
        <NoteRow indent="pl-[54px]">Then, fill in the weapon(s)’s Lowest and Highest damage values, as well as its Seconds Per Attack</NoteRow>
        <NoteRow indent="pl-[54px]">Unless you are using "Two 1H Weapons", the bottom cells will be greyed out as they are not being used.</NoteRow>
        <NoteRow label="#4">Type in each value as displayed in your Character Sheet.</NoteRow>
        <NoteRow indent="pl-[54px]">If you do not have a value in your Character Sheet, make the value 0, unless stated otherwise.</NoteRow>
        <div className="h-[133px]" />
        <NoteRow label="General:" indent="w-[101px]">Green relates to the Default Skill, while blue relates to the Offensive Move.</NoteRow>
        <NoteRow indent="pl-[101px]">A gradient of the two means it is related to both.</NoteRow>
        <NoteRow indent="pl-[101px]">Red means that it is not being used in any calculations – determined by what is filled out in #2.</NoteRow>
      </div>

      {/* dashed input column */}
      <div className="absolute left-[197px] top-[535px] w-[145px] h-[482px] border-2 border-dashed border-black z-20" />

      {/* red hand-drawn markup */}
      <div className="absolute left-[2px] top-[138px] w-[493px] h-[75px] rounded-[50%] border-[7px] border-[#ff0000] z-30" />
      <svg className="absolute left-0 top-0 z-30 pointer-events-none" width="700" height="340" fill="none">
        <path d="M206 251.5H333.5a10 10 0 0 1 10 10V272H572.5a10 10 0 0 1 10 10v26.5a10 10 0 0 1-10 10H206a10 10 0 0 1-10-10V261.5a10 10 0 0 1 10-10z" stroke="#ff0000" strokeWidth="6" />
      </svg>
      <div className="absolute left-[199px] top-[390px] w-[277px] h-[30px] rounded-[12px] border-[5px] border-[#ff0000] z-30" />
      <div className="absolute left-[191px] top-[569px] w-[156px] h-[454px] border-[7px] border-[#ff0000] z-30" />

      <div className="absolute left-[498px] top-[155px] font-['Lato',sans-serif] text-[31px] leading-[38px] text-[#ff0000] z-30">#1</div>
      <div className="absolute left-[584px] top-[315px] font-['Lato',sans-serif] text-[31px] leading-[38px] text-[#ff0000] z-30">#2</div>
      <div className="absolute left-[414px] top-[493px] flex gap-[4px] font-['Lato',sans-serif] text-[31px] leading-[38px] z-30">
        <span className="text-[#ff0000]">#3</span>
        <span className="text-black">&amp;</span>
        <span className="text-[#b2ff00] tracking-[0.2px]">Arrows</span>
      </div>
      <div className="absolute left-[356px] top-[566px] font-['Lato',sans-serif] text-[31px] leading-[38px] text-[#ff0000] z-30">#4</div>
    </>
  );
}

export default function App() {
  return (
    <div className="relative w-[1928px] h-[1080px] overflow-hidden flex bg-white font-['Open_Sans',sans-serif]">
      <div className="w-[8px] bg-linear-to-r from-[#9a9a9a] to-[#cfcfcf] shrink-0" />
      <div className="w-[1920px] flex flex-col min-h-0">
        <TitleBar />
        <TabsRow />
        <Ribbon />
        <div className="h-[1px] bg-[#c8c8c8] shrink-0" />
        <SecurityBar />
        <FormulaBar />
        <div className="h-[794px] flex flex-col min-h-0 shrink-0 bg-white">
          <Sheet />
        </div>
        <TabStrip />
        <StatusBar />
      </div>
      <Annotations />
    </div>
  );
}
